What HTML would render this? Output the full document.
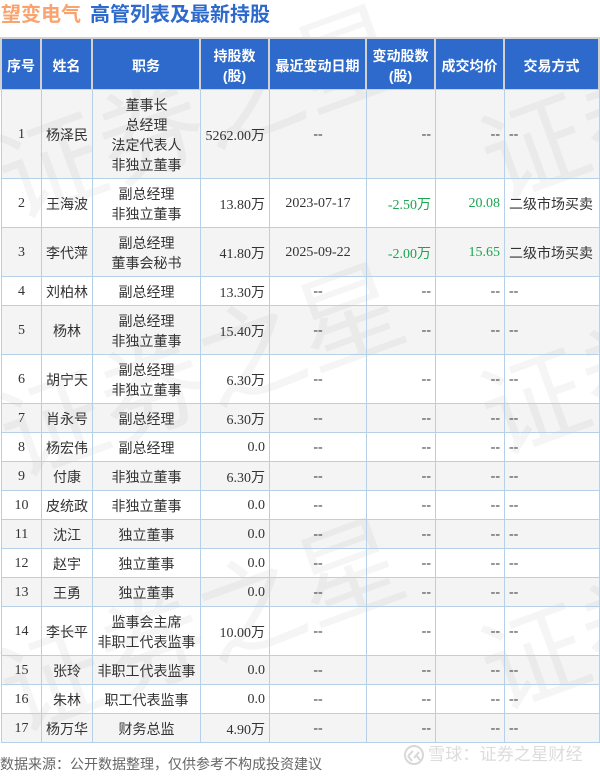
<!DOCTYPE html>
<html lang="zh"><head><meta charset="utf-8">
<style>
html,body{margin:0;padding:0;background:#fff}
body{width:600px;height:773px;position:relative;overflow:hidden;font-family:"Liberation Serif","Noto Sans CJK SC",sans-serif;color:#333}
.abs{position:absolute}
.title{left:1px;top:1px;font:bold 20px/28px "Liberation Sans","Noto Sans CJK SC",sans-serif;white-space:nowrap}
table{border-collapse:separate;border-spacing:0;table-layout:fixed;font-size:14px;line-height:20px}
#hd{left:0;top:37px;width:600px;height:53px;background:#d2d2d2}
.h{position:absolute;top:2px;height:50px;box-sizing:border-box;padding-top:3px;background:#2e6acb;color:#fff;font:bold 14px/20px "Liberation Sans","Noto Sans CJK SC",sans-serif;display:flex;align-items:center;justify-content:center;text-align:center}
#t{left:1px;top:90px;width:599px;border-left:1px solid #b5d0e8}
#t td{border-right:1px solid #b5d0e8;border-bottom:1px solid #b5d0e8;padding:2px 4px 0;text-align:center;box-sizing:border-box;white-space:nowrap}
#t td.r{text-align:right}
#t td.l{text-align:left}
#t td.g{color:#1aa64f}
#t td:nth-child(2),#t td:nth-child(3),#t td:nth-child(4),#t td.c{padding-top:6px}
#t td.z{padding-top:2px}
#t tr:nth-child(odd) td{background:rgba(0,0,0,.045)}
</style></head><body>
<svg class="abs" style="left:0;top:0" width="600" height="773">
<g font-family="'Liberation Sans','Noto Sans CJK SC',sans-serif" font-size="105" fill="#000" fill-opacity=".04">
<text transform="translate(15,220) rotate(-20)">证券之星</text>
<text transform="translate(498,201) rotate(-20)">证券之星</text>
<text transform="translate(17,478) rotate(-20)">证券之星</text>
<text transform="translate(498,456) rotate(-20)">证券之星</text>
<text transform="translate(17,733) rotate(-20)">证券之星</text>
<text transform="translate(498,711) rotate(-20)">证券之星</text>
</g></svg>
<div class="abs title"><span style="color:#f9a470">望变电气</span><span style="color:#2e6acb;margin-left:9px">高管列表及最新持股</span></div>
<div class="abs" id="hd">
<div class="h" style="left:2px;width:38px">序号</div>
<div class="h" style="left:42px;width:49px">姓名</div>
<div class="h" style="left:93px;width:106px">职务</div>
<div class="h" style="left:201px;width:67px">持股数<br>(股)</div>
<div class="h" style="left:270px;width:95px">最近变动日期</div>
<div class="h" style="left:367px;width:67px">变动股数<br>(股)</div>
<div class="h" style="left:436px;width:67px">成交均价</div>
<div class="h" style="left:505px;width:93px">交易方式</div>
</div>
<table class="abs" id="t">
<colgroup><col style="width:40px"><col style="width:51px"><col style="width:108px"><col style="width:69px"><col style="width:97px"><col style="width:69px"><col style="width:69px"><col style="width:95px"></colgroup>
<tr style="height:89px"><td>1</td><td>杨泽民</td><td>董事长<br>总经理<br>法定代表人<br>非独立董事</td><td class="r">5262.00万</td><td>--</td><td class="r">--</td><td class="r">--</td><td class="l">--</td></tr>
<tr style="height:49px"><td>2</td><td>王海波</td><td>副总经理<br>非独立董事</td><td class="r">13.80万</td><td>2023-07-17</td><td class="r g c">-2.50万</td><td class="r g">20.08</td><td class="l c">二级市场买卖</td></tr>
<tr style="height:49px"><td>3</td><td>李代萍</td><td>副总经理<br>董事会秘书</td><td class="r">41.80万</td><td>2025-09-22</td><td class="r g c">-2.00万</td><td class="r g">15.65</td><td class="l c">二级市场买卖</td></tr>
<tr style="height:29px"><td>4</td><td>刘柏林</td><td>副总经理</td><td class="r">13.30万</td><td>--</td><td class="r">--</td><td class="r">--</td><td class="l">--</td></tr>
<tr style="height:49px"><td>5</td><td>杨林</td><td>副总经理<br>非独立董事</td><td class="r">15.40万</td><td>--</td><td class="r">--</td><td class="r">--</td><td class="l">--</td></tr>
<tr style="height:49px"><td>6</td><td>胡宁天</td><td>副总经理<br>非独立董事</td><td class="r">6.30万</td><td>--</td><td class="r">--</td><td class="r">--</td><td class="l">--</td></tr>
<tr style="height:29px"><td>7</td><td>肖永号</td><td>副总经理</td><td class="r">6.30万</td><td>--</td><td class="r">--</td><td class="r">--</td><td class="l">--</td></tr>
<tr style="height:29px"><td>8</td><td>杨宏伟</td><td>副总经理</td><td class="r z">0.0</td><td>--</td><td class="r">--</td><td class="r">--</td><td class="l">--</td></tr>
<tr style="height:29px"><td>9</td><td>付康</td><td>非独立董事</td><td class="r">6.30万</td><td>--</td><td class="r">--</td><td class="r">--</td><td class="l">--</td></tr>
<tr style="height:29px"><td>10</td><td>皮统政</td><td>非独立董事</td><td class="r z">0.0</td><td>--</td><td class="r">--</td><td class="r">--</td><td class="l">--</td></tr>
<tr style="height:29px"><td>11</td><td>沈江</td><td>独立董事</td><td class="r z">0.0</td><td>--</td><td class="r">--</td><td class="r">--</td><td class="l">--</td></tr>
<tr style="height:29px"><td>12</td><td>赵宇</td><td>独立董事</td><td class="r z">0.0</td><td>--</td><td class="r">--</td><td class="r">--</td><td class="l">--</td></tr>
<tr style="height:29px"><td>13</td><td>王勇</td><td>独立董事</td><td class="r z">0.0</td><td>--</td><td class="r">--</td><td class="r">--</td><td class="l">--</td></tr>
<tr style="height:49px"><td>14</td><td>李长平</td><td>监事会主席<br>非职工代表监事</td><td class="r">10.00万</td><td>--</td><td class="r">--</td><td class="r">--</td><td class="l">--</td></tr>
<tr style="height:29px"><td>15</td><td>张玲</td><td>非职工代表监事</td><td class="r z">0.0</td><td>--</td><td class="r">--</td><td class="r">--</td><td class="l">--</td></tr>
<tr style="height:29px"><td>16</td><td>朱林</td><td>职工代表监事</td><td class="r z">0.0</td><td>--</td><td class="r">--</td><td class="r">--</td><td class="l">--</td></tr>
<tr style="height:29px"><td>17</td><td>杨万华</td><td>财务总监</td><td class="r">4.90万</td><td>--</td><td class="r">--</td><td class="r">--</td><td class="l">--</td></tr>
</table>
<div class="abs" style="left:0;top:756px;font-size:14px;line-height:20px;color:#666;white-space:nowrap">数据来源：公开数据整理，仅供参考不构成投资建议</div>
<svg class="abs" style="left:403px;top:744px" width="22" height="22" viewBox="0 0 22 22" fill="none" stroke="#d8d8d8" stroke-width="2"><circle cx="11" cy="11" r="9"/><path d="M5 12l5-5M5 12l4 5M11 14l5-6M13 11l4 5"/></svg>
<div class="abs" style="left:428px;top:743px;font:17px/24px 'Liberation Sans','Noto Sans CJK SC',sans-serif;color:#dcdcdc;white-space:nowrap;letter-spacing:.2px">雪球：证券之星财经</div>
</body></html>
